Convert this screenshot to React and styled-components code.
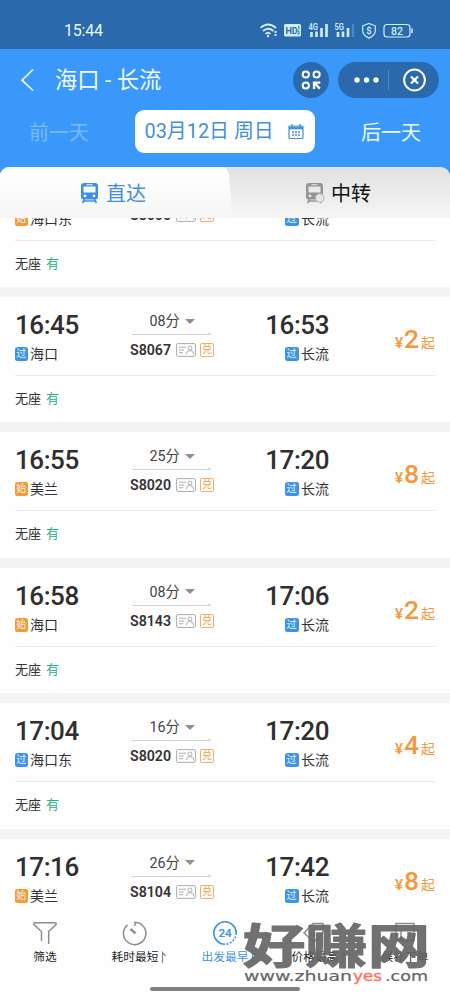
import React from 'react';
import styled, { createGlobalStyle } from 'styled-components';

const Global = createGlobalStyle`
  * { box-sizing: border-box; }
  body { margin: 0; background: #fefefe; font-family: Roboto, "Noto Sans CJK SC", sans-serif; color: #333; }
`;
const Screen = styled.div`
  position: relative; width: 450px; height: 1000px; display: flex; flex-direction: column;
  overflow: hidden; background: #fefefe;
`;
const StatusBar = styled.div`
  height: 49px; flex: none; background: #2a69ac; color: #e8f8ff; padding: 12px 37px 0 64px;
  display: flex; justify-content: space-between; align-items: center;
`;
const Clock = styled.span`font-size: 16px; line-height: 36px; letter-spacing: -0.2px;`;
const Header = styled.header`
  height: 61px; flex: none; background: #3b98fb; display: flex; align-items: center;
  padding: 0 11px 0 20px; color: #f2fbff;
`;
const Title = styled.h1`
  margin: 0 auto 0 20px; font-size: 22.3px; line-height: 32px; font-weight: 400; white-space: pre; padding-top: 1px;
`;
const RoundButton = styled.div`
  width: 36px; height: 36px; border-radius: 18px; background: #2a69ac; margin-right: 9px;
  display: flex; align-items: center; justify-content: center;
`;
const Capsule = styled.div`
  width: 101px; height: 36px; border-radius: 18px; background: #2a69ac;
`;
const DateRow = styled.div`
  height: 57px; flex: none; background: #3b98fb; display: flex; justify-content: space-between;
  align-items: flex-start; padding: 0 29px;
`;
const DayLink = styled.span`
  font-size: 20px; line-height: 46px; color: ${p => (p.$dim ? '#76baff' : '#eefaff')};
`;
const DateBox = styled.div`
  width: 180px; height: 43px; margin-left: 15px; margin-right: 16px; border-radius: 9px; background: #fff; color: #4190df;
  display: flex; align-items: center; justify-content: space-between; padding: 0 11px 0 10px;
  font-size: 19.9px; line-height: 45px; white-space: pre;
`;
const TabArea = styled.div`height: 51px; flex: none; background: #3b98fb;`;
const Tabs = styled.div`
  height: 51px; border-radius: 9px 9px 0 0; display: flex; overflow: hidden;
  background: linear-gradient(#e1e1e1, #f5f5f5);
`;
const Tab = styled.div`
  width: ${p => (p.$active ? '234px' : '216px')}; display: flex; align-items: center;
  padding-left: ${p => (p.$active ? '80px' : '71px')}; gap: 6px; font-size: 20px; line-height: 51px;
  color: ${p => (p.$active ? '#4190df' : '#111')};
  background: ${p => (p.$active ? 'linear-gradient(#ffffff, #f5f5f5)' : 'transparent')};
  clip-path: ${p => (p.$active ? 'path("M0 0H223Q227 0 229 8L231 30Q232 45 234 51H0Z")' : 'none')};
`;
const TabLabel = styled.span`padding-top: 2px; height: 51px;`;
const List = styled.main`flex: 1; min-height: 0; overflow: hidden; background: #f4f4f4;`;
const Cards = styled.div`
  display: flex; flex-direction: column; gap: 10px; margin-top: -56.4px;
`;
const Card = styled.section`height: 125.4px; flex: none; background: #fefefe; padding: 0 15px;`;
const Trip = styled.div`
  height: 79px; border-bottom: 1px solid #e8e8e8; display: flex; align-items: flex-start;
`;
const Endpoint = styled.div`
  width: ${p => p.$w}px; display: flex; flex-direction: column; padding-top: 12px;
  align-items: ${p => (p.$right ? 'flex-end' : 'flex-start')};
`;
const Time = styled.div`font-size: 26px; line-height: 32px; font-weight: 500; letter-spacing: -0.45px; color: #2f2f2f;`;
const Station = styled.div`
  display: flex; align-items: center; gap: 2.5px; font-size: 14px; line-height: 20px; height: 20px; margin-top: 3px;
`;
const Mark = styled.span`
  width: ${p => (p.$wide ? 14 : 12.5)}px; height: 14px; border-radius: 2.5px; color: #eaf6ff; font-size: 10px; line-height: 14px;
  text-align: center; background: ${p => (p.$start ? '#f79a34' : '#3b94e8')};
`;
const Middle = styled.div`width: 84px; margin-left: 31px; padding-top: 14px;`;
const Duration = styled.div`
  height: 20px; display: flex; align-items: center; gap: 5px; padding-left: 19.5px;
  font-size: 14.3px; line-height: 20px; color: #444;
`;
const Triangle = styled.i`
  border: 5px solid transparent; border-top: 5px solid #8e8e8e; border-bottom: 0;
`;
const Track = styled.svg`display: block;`;
const TrainRow = styled.div`display: flex; align-items: center; height: 20px; margin-top: 4px;`;
const TrainNo = styled.b`
  width: 46px; font-size: 14.2px; line-height: 20px; font-weight: 600; color: #333;
`;
const Exchange = styled.span`
  margin-left: 4px; width: 14px; height: 14px; border: 1px solid #f0b065; border-radius: 2px;
  color: #eba14c; font-size: 10px; line-height: 12px; text-align: center;
`;
const Price = styled.div`
  margin-left: auto; padding-top: 26px; display: flex; align-items: baseline; color: #f5983b;
`;
const Yen = styled.span`font-size: 15px; font-weight: 500; margin-right: 1px;`;
const Amount = styled.span`font-size: 26.5px; line-height: 32px; font-weight: 500; width: 17px;`;
const From = styled.span`font-size: 14px; line-height: 20px;`;
const Seats = styled.div`
  display: flex; gap: 5px; padding-top: 13px; font-size: 13px; line-height: 20px;
`;
const Available = styled.span`color: #1fb57f;`;
const Nav = styled.nav`
  height: 92px; flex: none; display: flex; padding-top: 12px; background: #fefefe;
`;
const NavItem = styled.div`
  width: 90px; display: flex; flex-direction: column; align-items: center; font-size: 11.7px;
  line-height: 18px; color: ${p => (p.$active ? '#3f93e2' : '#222')}; white-space: nowrap;
`;
const NavLabel = styled.div`
  margin-top: 2px; display: flex; align-items: center; gap: 3px; padding-left: ${p => (p.$sorted ? 8 : 0)}px;
`;
const HomeBar = styled.div`
  position: absolute; left: 150px; top: 987px; width: 150px; height: 4px; border-radius: 2px; background: #808080;
`;
const Watermark = styled.svg`position: absolute; left: 235px; top: 910px;`;

const StatusIcons = () => (
  <svg width="154" height="20" viewBox="0 1 154 20" fill="none" stroke="#cfefff" strokeWidth="1.7">
    <path d="M1.5 8Q9 1 17 8M4 11Q9 6.5 14.5 11M6.5 14Q9 11.5 11.5 14" />
    <circle cx="9" cy="16" r="1.2" fill="#cfefff" stroke="none" />
    <path d="M16.5 11v2M16.5 14v2" strokeWidth="2" />
    <rect x="25" y="4" width="17" height="12.5" rx="1.5" fill="#cfefff" stroke="none" />
    <text x="26.5" y="13.7" fill="#2a69ac" stroke="none" fontSize="9" fontWeight="700">HD</text>
    <path d="M39 6.5h1v3M38.5 11h1.5v3h-1.5" stroke="#2a69ac" strokeWidth="1" />
    <text x="49.5" y="9.5" fill="#cfefff" stroke="none" fontSize="8.5" fontWeight="600" textLength="9.5" lengthAdjust="spacingAndGlyphs">4G</text>
    <path d="M52.5 17v-5M57.5 17v-5.5M62.5 17v-9M67.5 17V4" strokeWidth="2.6" />
    <text x="75.5" y="9.5" fill="#cfefff" stroke="none" fontSize="8.5" fontWeight="600" textLength="9.5" lengthAdjust="spacingAndGlyphs">5G</text>
    <path d="M79 17v-5M84 17v-5.5M89 17v-9" strokeWidth="2.6" />
    <path d="M94 17V4" stroke="#4d89c2" strokeWidth="2.3" />
    <path d="M110 3.5l6.3 2.3v5q0 4.5-6.3 7.3q-6.3-2.8-6.3-7.3v-5z" strokeWidth="1.2" />
    <text x="107.3" y="14" fill="#cfefff" stroke="none" fontSize="9.5" fontWeight="600">$</text>
    <rect x="125" y="4.5" width="26" height="12.5" rx="3" strokeWidth="1.2" />
    <path d="M153 8.5v4.5" strokeWidth="1.5" />
    <text x="132" y="14.5" fill="#cfefff" stroke="none" fontSize="10.5" fontWeight="500">82</text>
  </svg>
);
const BackIcon = () => (
  <svg width="15" height="24" viewBox="0 0 15 24" fill="none" stroke="#f2fbff" strokeWidth="1.7"><path d="M13 1.5L2 12.2l11 10.3" /></svg>
);
const GridIcon = () => (
  <svg width="20" height="20" viewBox="0 0 20 20" fill="none" stroke="#fff" strokeWidth="2">
    <circle cx="4.8" cy="4.5" r="3.1" /><circle cx="15.6" cy="4.5" r="3.1" /><circle cx="4.8" cy="15.5" r="3.1" />
    <path d="M13 19v-6.3h6.3M13.4 13l5.4 5.6" strokeWidth="2.3" />
  </svg>
);
const CapsuleIcon = () => (
  <svg width="101" height="36" viewBox="0 0 101 36" fill="none" stroke="#fff" strokeWidth="2">
    <g fill="#fff" stroke="none"><circle cx="19" cy="18" r="2.7" /><circle cx="28.5" cy="18" r="2.7" /><circle cx="38" cy="18" r="2.7" /></g>
    <path d="M50.5 8v20" stroke="#5289c0" strokeWidth="1" />
    <circle cx="76.5" cy="18" r="10.4" /><path d="M73 14.5l7 7M80 14.5l-7 7" strokeWidth="2.3" />
  </svg>
);
const CalendarIcon = () => (
  <svg width="16" height="16" viewBox="0 0 16 16" fill="none" stroke="#4190df" strokeWidth="1.2">
    <rect x="1" y="2" width="14" height="12.5" rx="1" /><path d="M1 4h14" strokeWidth="2.6" /><path d="M4 0v3M12 0v3" />
    <path d="M4 8h2M7 8h2M10 8h2M4 11h2M7 11h2M10 11h2" strokeWidth="1.4" />
  </svg>
);
const TrainIcon = ({ color, transfer }) => (
  <svg width="20" height="22" viewBox="0 0 20 22">
    <path fill={color} fillRule="evenodd" d="M4 1h11q3 0 3 3v11q0 2.5-3 2.5H4q-3 0-3-2.5V4q0-3 3-3zM3.5 4.6v6h12v-6zM6.5 2.3v1h6v-1zM5 12.5a1.4 1.4 0 100 2.8 1.4 1.4 0 000-2.8zM14 12.5a1.4 1.4 0 100 2.8 1.4 1.4 0 000-2.8z" />
    <path d="M4.6 17l-2 4M14.4 17l2 4M4 19h11" stroke={color} strokeWidth="1.7" />
    {transfer && <circle cx="14.7" cy="16" r="4.3" fill="#e7e7e7" stroke="#b0b0b0" strokeWidth="1" />}
  </svg>
);
const TrackLine = () => (
  <Track width="84" height="5" viewBox="0 0 84 5" fill="none" stroke="#d2d2d2"><path d="M2 3.5h79l-3-2" /></Track>
);
const IdCard = () => (
  <svg width="20" height="14" viewBox="0 0 20 14" fill="none" stroke="#adadad">
    <rect x=".6" y=".6" width="18.8" height="12.8" rx="1.2" /><path d="M3 4.2h7M3 7h5M3 9.7h4" />
    <circle cx="14" cy="5" r="2" /><path d="M10.2 11.2q.4-3.7 3.8-3.7t3.8 3.7" />
  </svg>
);
const UpTick = ({ color = '#888' }) => (
  <svg width="5" height="12" viewBox="0 0 5 12" fill="none" stroke={color} strokeWidth="1.2"><path d="M1.5 12V1.5L4.5 5" /></svg>
);
const gray = { fill: 'none', stroke: '#8d8d8d', strokeWidth: 1.5 };
const FilterIcon = () => (
  <svg width="26" height="26" viewBox="0 0 26 26" {...gray}><path d="M9.5 21v-9.5L2 4.5Q1.3 2.7 3 2.7h20q1.7 0 1 1.8l-7.3 7V24" /></svg>
);
const TimerIcon = () => (
  <svg width="26" height="26" viewBox="0 0 26 26" {...gray}><path d="M13 6V2.2A11.2 11.2 0 1 1 5.5 4.8" /><path d="M8.5 9l5 4.3" strokeWidth="2.4" /></svg>
);
const DepartIcon = () => (
  <svg width="26" height="26" viewBox="0 0 26 26" fill="none" stroke="#3f93e2" strokeWidth="1.6">
    <path d="M13 24.2A11.2 11.2 0 1 1 24.2 13" /><path d="M24.2 13A11.2 11.2 0 0 1 13 24.2" strokeDasharray="2 1.5" />
    <text x="13" y="17" fill="#3f93e2" stroke="none" textAnchor="middle" fontSize="11.5" fontWeight="600">24</text>
  </svg>
);
const PriceIcon = () => (
  <svg width="26" height="26" viewBox="0 0 26 26" {...gray}><path d="M2 13L11 3.5h10v9l-9 9.5zM8 12l5 4" /></svg>
);
const OrderIcon = () => (
  <svg width="26" height="26" viewBox="0 0 26 26" {...gray}><path d="M4 3.5h18v17H4zM9 11v6q0 5 5 3M15 13h5" /></svg>
);

const trips = [
  ['16:28', '海口东', true, '25分', 'S8000', '16:53', '2'],
  ['16:45', '海口', false, '08分', 'S8067', '16:53', '2'],
  ['16:55', '美兰', true, '25分', 'S8020', '17:20', '8'],
  ['16:58', '海口', true, '08分', 'S8143', '17:06', '2'],
  ['17:04', '海口东', false, '16分', 'S8020', '17:20', '4'],
  ['17:16', '美兰', true, '26分', 'S8104', '17:42', '8'],
];

function TripCard({ trip }) {
  const [dep, station, start, duration, train, arr, price] = trip;
  return (
    <Card>
      <Trip>
        <Endpoint $w={84}>
          <Time>{dep}</Time>
          <Station><Mark $start={start}>{start ? '始' : '过'}</Mark>{station}</Station>
        </Endpoint>
        <Middle>
          <Duration>{duration}<Triangle /></Duration>
          <TrackLine />
          <TrainRow><TrainNo>{train}</TrainNo><IdCard /><Exchange>兑</Exchange></TrainRow>
        </Middle>
        <Endpoint $w={115} $right>
          <Time>{arr}</Time>
          <Station><Mark $wide>过</Mark>长流</Station>
        </Endpoint>
        <Price><Yen>¥</Yen><Amount>{price}</Amount><From>起</From></Price>
      </Trip>
      <Seats><span>无座</span><Available>有</Available></Seats>
    </Card>
  );
}

export default function App() {
  return (
    <>
      <Global />
      <Screen>
        <StatusBar><Clock>15:44</Clock><StatusIcons /></StatusBar>
        <Header>
          <BackIcon /><Title>海口 - 长流</Title>
          <RoundButton><GridIcon /></RoundButton>
          <Capsule><CapsuleIcon /></Capsule>
        </Header>
        <DateRow>
          <DayLink $dim>前一天</DayLink>
          <DateBox>03月12日 周日<CalendarIcon /></DateBox>
          <DayLink>后一天</DayLink>
        </DateRow>
        <TabArea>
          <Tabs>
            <Tab $active><TrainIcon color="#3d8fe6" /><TabLabel>直达</TabLabel></Tab>
            <Tab><TrainIcon color="#949494" transfer /><TabLabel>中转</TabLabel></Tab>
          </Tabs>
        </TabArea>
        <List><Cards>{trips.map(t => <TripCard key={t[0]} trip={t} />)}</Cards></List>
        <Nav>
          <NavItem><FilterIcon /><NavLabel>筛选</NavLabel></NavItem>
          <NavItem><TimerIcon /><NavLabel $sorted>耗时最短<UpTick /></NavLabel></NavItem>
          <NavItem $active><DepartIcon /><NavLabel $sorted>出发最早<UpTick color="#3f93e2" /></NavLabel></NavItem>
          <NavItem><PriceIcon /><NavLabel $sorted>价格最高<UpTick /></NavLabel></NavItem>
          <NavItem><OrderIcon /><NavLabel>候补下单</NavLabel></NavItem>
        </Nav>
        <HomeBar />
        <Watermark width="200" height="80" viewBox="0 0 200 80" fill="#666">
          <text x="8" y="52.5" fontFamily="Noto Sans CJK SC" fontSize="47" fontWeight="700" stroke="#666" strokeWidth="1.2" strokeLinejoin="round" textLength="187" lengthAdjust="spacingAndGlyphs" opacity="0.92">好赚网</text>
          <text x="9" y="71" fontFamily="DejaVu Sans" fontSize="14" stroke="#666" strokeWidth=".2" textLength="108" lengthAdjust="spacingAndGlyphs">www.zhuan</text>
          <text x="118" y="71" fontFamily="DejaVu Sans" fontSize="14" fill="#ff705c" stroke="#ff705c" strokeWidth=".3" textLength="29" lengthAdjust="spacingAndGlyphs">yes</text>
          <text x="150" y="71" fontFamily="DejaVu Sans" fontSize="14" stroke="#666" strokeWidth=".2" textLength="43" lengthAdjust="spacingAndGlyphs">.com</text>
        </Watermark>
      </Screen>
    </>
  );
}
